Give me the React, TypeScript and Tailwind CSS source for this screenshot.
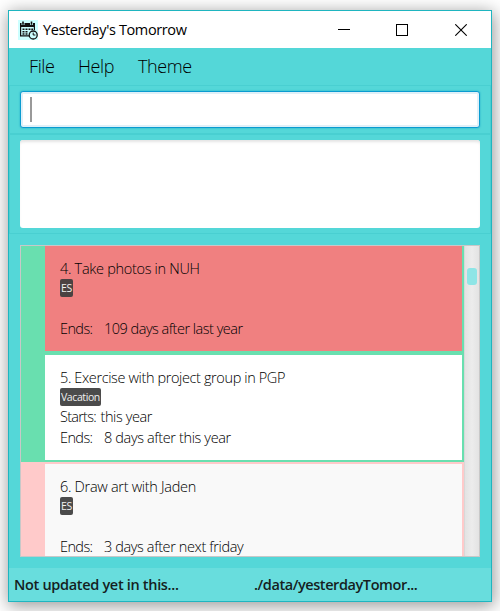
import React from "react";

type Task = {
  title: string;
  tag: string;
  starts?: string;
  ends: string;
  band: string;
  card: string;
  tracking: string;
  endTracking: string;
  tagStyle: string;
};

const tasks: Task[] = [
  {
    title: "4. Take photos in NUH",
    tag: "ES",
    ends: "109 days after last year",
    band: "bg-[#69dfaf] h-[107px] pt-0",
    card: "bg-[#f08080]",
    tracking: "tracking-[-0.3px]",
    endTracking: "tracking-[-0.5px]",
    tagStyle: "w-[13px] bg-[#4b4242]",
  },
  {
    title: "5. Exercise with project group in PGP",
    tag: "Vacation",
    starts: "this year",
    ends: "8 days after this year",
    band: "bg-[#69dfaf] h-[109px] pt-[2px]",
    card: "bg-white",
    tracking: "tracking-[-0.38px]",
    endTracking: "tracking-[-0.37px]",
    tagStyle: "w-[41px] bg-[#4b4b4b]",
  },
  {
    title: "6. Draw art with Jaden",
    tag: "ES",
    ends: "3 days after next friday",
    band: "bg-[#ffcaca] h-[109px] pt-[2px]",
    card: "bg-[#f9f9f9]",
    tracking: "tracking-[-0.3px]",
    endTracking: "tracking-[-0.38px]",
    tagStyle: "w-[13px] bg-[#4b4b4b]",
  },
];

function CalendarIcon() {
  return (
    <svg width="20" height="20" viewBox="0 0 20 20" className="bg-[#ccffff]">
      <path d="M2 3h15v4H2z" fill="#111" />
      <path d="M5 1v4M13.5 1v4" stroke="#ccffff" strokeWidth="3" />
      <path d="M5 1.5v3.2M13.5 1.5v3.2" stroke="#111" strokeWidth="1.6" />
      <path d="M2.6 6v9.9H11M16.4 6v4" fill="none" stroke="#111" strokeWidth="1.2" />
      <path
        d="M4.5 8.5h2v1.6h-2zM7.5 8.5h2v1.6h-2zM10.5 8.5h2v1.6h-2zM13.3 8.5h1.8v1.6h-1.8zM4.5 11h2v1.6h-2zM7.5 11h2v1.6h-2zM4.5 13.3h2v1.4h-2zM7.5 13.3h2v1.4h-2z"
        fill="#111"
      />
      <circle cx="15.2" cy="15" r="4" fill="#ccffff" stroke="#111" strokeWidth="1.3" />
      <path d="M15.2 12.6V15h2.2" fill="none" stroke="#111" strokeWidth="1" />
    </svg>
  );
}

function TitleBar() {
  return (
    <header className="flex h-[37px] shrink-0 items-center bg-white pl-[9px] text-black">
      <CalendarIcon />
      <h1 className="ml-[5px] grow whitespace-nowrap font-['Open_Sans',sans-serif] text-[14.5px] font-normal tracking-[-0.38px]">
        Yesterday's Tomorrow
      </h1>
      <div className="flex gap-[46px] pr-[24px]">
        <svg width="13" height="12" viewBox="0 0 13 12" shapeRendering="crispEdges">
          <path d="M0 5h12v1H0z" />
        </svg>
        <svg width="12" height="12" viewBox="0 0 12 12" shapeRendering="crispEdges" className="-ml-px mr-px">
          <path d="M.5.5h11v11H.5z" fill="none" stroke="#000" />
        </svg>
        <svg width="12" height="12" viewBox="0 0 12 12">
          <path d="M.3.3l11.4 11.4M11.7.3L.3 11.7" fill="none" stroke="#000" strokeWidth="1.1" />
        </svg>
      </div>
    </header>
  );
}

function TaskRow({ task }: { task: Task }) {
  return (
    <li className={`shrink-0 pr-[2px] pl-[24px] ${task.band}`}>
      <div className={`h-[105px] pt-[13px] pl-[15px] text-[14.5px] leading-[20px] whitespace-nowrap ${task.card}`}>
        <div className={task.tracking}>{task.title}</div>
        <div className="flex h-[19px] items-start">
          <span className={`h-[18px] rounded-[2px] px-[1px] text-[10.5px] leading-[18px] font-normal tracking-[-0.4px] text-[#f0f0f0] ${task.tagStyle}`}>
            {task.tag}
          </span>
        </div>
        <div className="flex h-[21px]">
          {task.starts && (
            <>
              <span className="w-[40.5px] tracking-[-0.75px]">Starts:</span>
              <span className="tracking-[-0.4px]">{task.starts}</span>
            </>
          )}
        </div>
        <div className="flex h-[20px]">
          <span className="w-[44px] tracking-[-0.6px]">Ends:</span>
          <span className={task.endTracking}>{task.ends}</span>
        </div>
      </div>
    </li>
  );
}

export default function App() {
  return (
    <div className="h-[611px] w-[500px] overflow-hidden bg-white px-[8px] pt-[10px] font-['Open_Sans',sans-serif] font-light text-black">
      <div className="flex h-[592px] w-[484px] flex-col border border-[#1fb5c0] bg-[#54d7d8] shadow-[1px_3px_16px_1px_rgba(0,0,0,0.4)]">
        <TitleBar />
        <nav className="flex h-[37px] shrink-0 items-center gap-[23px] pl-[20px] text-[18px] whitespace-nowrap">
          <span className="w-[26px] tracking-[-0.4px]">File</span>
          <span className="w-[37px] tracking-[-0.4px]">Help</span>
          <span className="tracking-[-0.4px]">Theme</span>
        </nav>
        <div className="h-[50px] shrink-0 border border-b-2 border-[#49cfd1] px-[10px] pt-[5px]">
          <div className="flex h-[37px] items-center rounded-[3px] border border-[#0a9bd0] bg-white pl-[9px] shadow-[inset_0_0_0_2px_#dff0f8,0_0_2px_#1ba8c8]">
            <div className="h-[25px] w-[2px] bg-[#999]" />
          </div>
        </div>
        <div className="h-[99px] shrink-0 border border-t-0 border-[#49cfd1] px-[10px] pt-[5px]">
          <div className="h-[88px] rounded-[3px] bg-white shadow-[inset_0_3px_3px_-1px_#e4e4e4]" />
        </div>
        <div className="shrink-0 px-[11px] pt-[11px] pb-[11px]">
          <div className="flex h-[312px] border border-[#c8c8c8]">
            <ul className="flex w-[443px] flex-col overflow-hidden">
              {tasks.map((task) => (
                <TaskRow key={task.title} task={task} />
              ))}
            </ul>
            <div className="w-[15px] border-l border-[#d8d8d8] bg-linear-to-r from-[#e3e3e3] via-[#ececec] to-[#e3e3e3] pt-[22px] pl-[2px]">
              <div className="h-[17px] w-[10px] rounded-[3px] bg-[#8ee5e6]" />
            </div>
          </div>
        </div>
        <footer className="flex grow items-center bg-[#68dddd] pl-[5px] text-[14.5px] font-semibold whitespace-nowrap text-[#151f1f]">
          <span className="w-[240px] tracking-[-0.32px]">Not updated yet in this...</span>
          <span className="tracking-[-0.42px]">./data/yesterdayTomor...</span>
        </footer>
      </div>
    </div>
  );
}
